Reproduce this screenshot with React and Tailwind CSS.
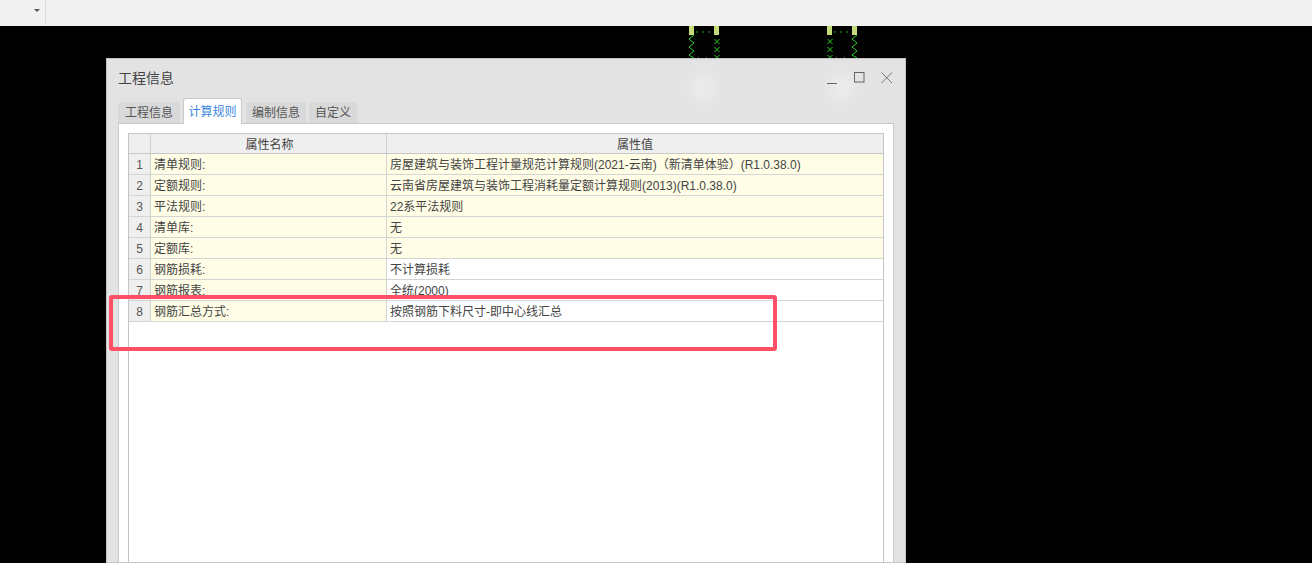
import React from 'react';

const rows = [
  { name: '清单规则:', value: '房屋建筑与装饰工程计量规范计算规则(2021-云南)（新清单体验）(R1.0.38.0)', yellow: true },
  { name: '定额规则:', value: '云南省房屋建筑与装饰工程消耗量定额计算规则(2013)(R1.0.38.0)', yellow: true },
  { name: '平法规则:', value: '22系平法规则', yellow: true },
  { name: '清单库:', value: '无', yellow: true },
  { name: '定额库:', value: '无', yellow: true },
  { name: '钢筋损耗:', value: '不计算损耗' },
  { name: '钢筋报表:', value: '全统(2000)' },
  { name: '钢筋汇总方式:', value: '按照钢筋下料尺寸-即中心线汇总' },
];

const font = { fontFamily: '"Liberation Sans", "Noto Sans CJK SC", sans-serif' };

const zig = (x) => `M${x + 5} 9l-5 4 5 4-5 4 5 4-5 4 5 3`;
const cross = (x) =>
  `M${x} 13l5 5M${x + 5} 13l-5 5M${x} 21l5 5M${x + 5} 21l-5 5M${x} 29l3 3M${x + 5} 29l-3 3`;

// Green wire marks poking out above the dialog
const Wires = ({ left, flip }) => (
  <svg className="absolute top-0" style={{ left }} width="32" height="32" viewBox="0 0 32 32" fill="none">
    <rect x="0" y="0" width="5" height="9" fill="#c3da78" />
    <rect x="25" y="0" width="5" height="9" fill="#c3da78" />
    <path d="M7 6H24" stroke="#1f9e1f" strokeDasharray="2 4" />
    <path d={flip ? cross(0.5) : zig(0)} stroke="#2ccf2c" />
    <path d={flip ? zig(25) : cross(25.5)} stroke="#2ccf2c" />
    <path d="M9 31.5H22" stroke="#1f9e1f" strokeDasharray="1 7" />
  </svg>
);

const Tab = ({ label, active, width }) => (
  <div
    className={
      active
        ? 'h-[26px] pt-[1px] flex items-center justify-center bg-white border border-b-0 border-[#c8c8c8] rounded-t-[3px] text-[#3a86e0] text-[12px] -mb-px relative z-10'
        : 'h-[21px] pt-[1px] flex items-center justify-center bg-[#d9d9d9] rounded-t-[3px] text-[#555] text-[12px]'
    }
    style={{ width }}
  >
    {label}
  </div>
);

const Row = ({ index, name, value, yellow }) => (
  <div className="flex h-[21px] border-b border-[#d4d4d4] text-[12px] leading-[22px] text-[#444]">
    <div className="w-[22px] bg-[#efefef] border-r border-[#d0d0d0] text-center text-[#555]">{index}</div>
    <div className="w-[236px] bg-[#fffde6] border-r border-[#d4d4d4] pl-[3px]">{name}</div>
    <div className={`flex-1 pl-[3px] whitespace-nowrap ${yellow ? 'bg-[#fffde6]' : 'bg-white'}`}>{value}</div>
  </div>
);

export default function App() {
  return (
    <div className="relative h-[563px] w-[1312px] overflow-hidden bg-black" style={font}>
      {/* Top toolbar */}
      <div className="flex h-[26px] bg-[#f1f1f1]">
        <div className="flex w-[46px] items-center justify-end border-r border-[#dedede] pr-[5px]">
          <div className="h-0 w-0 border-x-[3px] border-t-[3px] border-x-transparent border-t-[#555] mb-[5px]" />
        </div>
      </div>

      {/* Canvas */}
      <div className="relative pl-[106px] pt-[32px]">
        <Wires left={689} />
        <Wires left={827} flip />

        {/* Dialog */}
        <div className="relative h-[505px] w-[800px] overflow-hidden border border-[#c4c4c4] bg-[#e3e3e3]">
          {/* glow */}
          <div className="absolute left-[583px] top-[16px] h-[26px] w-[26px] rounded-full bg-[#f5f1f3] opacity-80 blur-[9px]" />
          <div className="absolute left-[721px] top-[16px] h-[26px] w-[26px] rounded-full bg-[#f5f1f3] opacity-80 blur-[9px]" />

          {/* Title bar */}
          <div className="relative flex h-[38px] items-center justify-between pl-[11px] pr-[11px]">
            <span className="text-[14px] text-[#444]">工程信息</span>
            <div className="flex items-center gap-[12px]">
              <svg width="16" height="16" viewBox="0 0 16 16" fill="none" stroke="#666">
                <path d="M2 13.5H12" />
              </svg>
              <svg width="16" height="16" viewBox="0 0 16 16" fill="none" stroke="#666" className="-ml-[1px]">
                <rect x="2.5" y="2.5" width="9.5" height="9.5" />
              </svg>
              <svg width="14" height="14" viewBox="0 0 14 14" fill="none" stroke="#777">
                <path d="M1.5 1.5L12 12M12 1.5L1.5 12" />
              </svg>
            </div>
          </div>

          {/* Tabs */}
          <div className="relative flex h-[26px] items-end pl-[11px]">
            <Tab label="工程信息" width={62} />
            <div className="w-[3px]" />
            <Tab label="计算规则" active width={59} />
            <div className="w-[4px]" />
            <Tab label="编制信息" width={60} />
            <div className="w-[3px]" />
            <Tab label="自定义" width={48} />
          </div>

          {/* Panel */}
          <div className="relative ml-[11px] h-[450px] w-[776px] border border-[#c8c8d0] bg-white pl-[9px] pt-[9px]">
            <div className="h-[440px] w-[756px] border border-[#c4c4c4]">
              <div className="flex h-[20px] border-b border-[#c8c8c8] bg-[#efefef] text-[12px] leading-[22px] text-[#444]">
                <div className="w-[22px] border-r border-[#d0d0d0]" />
                <div className="w-[236px] border-r border-[#d0d0d0] pl-[2px] text-center">属性名称</div>
                <div className="flex-1 text-center">属性值</div>
              </div>
              {rows.map((row, idx) => (
                <Row key={idx} index={idx + 1} {...row} />
              ))}
            </div>
          </div>
        </div>
      </div>

      {/* Red highlight box */}
      <div className="absolute left-[109px] top-[295px] h-[56px] w-[668px] rounded-[3px] border-4 border-[#fc5067]" />
    </div>
  );
}
